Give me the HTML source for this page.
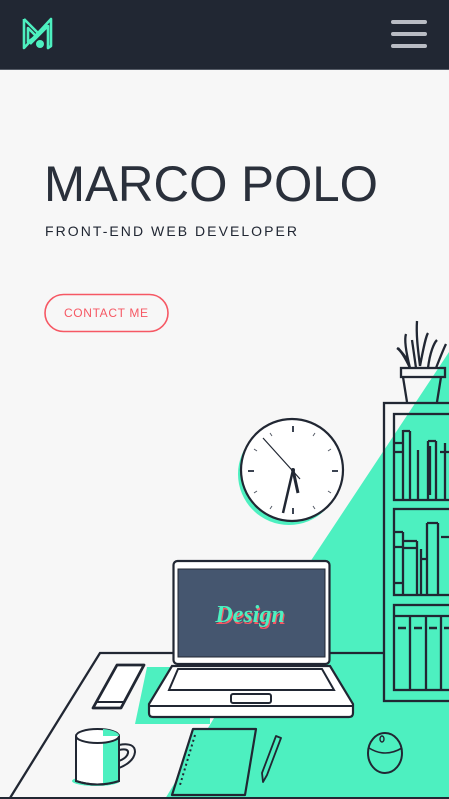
<!DOCTYPE html>
<html><head><meta charset="utf-8"><style>
html,body{margin:0;padding:0;width:449px;height:799px;overflow:hidden;background:#f7f7f7}
svg{display:block}
</style></head><body>
<svg width="449" height="799" viewBox="0 0 449 799" xmlns="http://www.w3.org/2000/svg">
<rect x="0" y="0" width="449" height="70" fill="#212733"/>
<rect x="0" y="69" width="449" height="1" fill="#555b66"/>
<g fill="none" stroke="#4df0c0" stroke-width="2.6" stroke-linejoin="round">
<path d="M24 19 L24 48 L38 33 L51 19 L51 46 L48 48 L48 26 L30 44"/>
<path d="M24 19 L38 33"/>
<path d="M28 28 L36 36 L28 42 Z"/>
</g>
<circle cx="40" cy="44" r="4" fill="#4df0c0"/>
<g fill="#b9bcc4">
<rect x="391" y="20" width="36" height="4" rx="2"/>
<rect x="391" y="32" width="36" height="4" rx="2"/>
<rect x="391" y="44" width="36" height="4" rx="2"/>
</g>
<text x="44" y="201" font-family="Liberation Sans, sans-serif" font-size="50" fill="#2a303b" textLength="334" lengthAdjust="spacingAndGlyphs">MARCO POLO</text>
<text x="45" y="236" font-family="Liberation Sans, sans-serif" font-size="14" fill="#212733" textLength="254" letter-spacing="2">FRONT-END WEB DEVELOPER</text>
<rect x="45" y="294.5" width="123" height="37" rx="18.5" fill="none" stroke="#f65864" stroke-width="1.6"/>
<text x="64" y="317" font-family="Liberation Sans, sans-serif" font-size="12" fill="#f65864" textLength="85" letter-spacing="1">CONTACT ME</text>
<path d="M449 352 L316 553 L294 586 L165 799 L449 799 Z" fill="#4df0c0"/>
<path d="M147 667 L180 667 L180 717 L210 717 L210 724 L135 724 Z" fill="#4df0c0"/>
<g fill="none" stroke="#212733" stroke-width="2.3">
<path d="M10 798 L100 653 L173 653"/>
<path d="M330 653 L384 653"/>
<rect x="384" y="403" width="80" height="298"/>
<rect x="394" y="414" width="70" height="86"/>
<rect x="394" y="509" width="70" height="86"/>
<rect x="394" y="605" width="70" height="85"/>
<path d="M394 443 L403 443 M394 452 L403 452 M403 430 L403 500 M410 431 L410 500 M403 431 L410 431 M418 450 L418 500 M428 441 L428 500 M428 441 L436 441 M436 441 L436 500 M430 446 L430 495 M445 443 L445 500 M440 452 L449 452"/>
<path d="M394 532 L403 532 M403 532 L403 595 M394 547 L403 547 M403 541 L417 541 M417 541 L417 595 M403 548 L417 548 M421 549 L421 595 M421 559 L427 559 M427 523 L427 595 M427 523 L438 523 M438 523 L438 595 M441 537 L449 537 M394 583 L403 583"/>
<path d="M394 616 L449 616 M410 616 L410 690 M426 616 L426 690 M441 616 L441 690" />
<path d="M398 628 L406 628 M414 628 L422 628 M429 628 L437 628 M444 628 L449 628" stroke-width="2.4"/>
<rect x="401" y="368" width="44" height="9"/>
<path d="M403 377 L407 402 M441 377 L437 402"/>
<path d="M410 368 C404 355 400 350 397 348 M410 368 C406 352 404 340 406 334 M416 368 L412 340 M420 366 C418 350 416 335 417 321 M420 366 C424 345 426 336 428 333 M428 368 C430 352 434 343 437 340 M436 368 C440 358 443 350 446 344 M410 368 C408 358 402 353 398 348"/>
</g>
<circle cx="289" cy="474" r="51" fill="#4df0c0"/>
<circle cx="292" cy="470" r="51" fill="#fff" stroke="#212733" stroke-width="2.2"/>
<g stroke="#3c4452" stroke-width="2">
<path d="M293 426 v6 M293 508 v6 M248 471 h6 M332 471 h6"/>
</g>
<g stroke="#555b66" stroke-width="1">
<path d="M270 433 l2 3 M315 433 l-2 3 M254 449 l3 2 M331 449 l-3 2 M254 493 l3 -2 M331 493 l-3 -2 M270 509 l2 -3 M315 509 l-2 -3"/>
</g>
<path d="M263 438 L300 479" stroke="#212733" stroke-width="1.2"/>
<path d="M293 470 L283 513" stroke="#212733" stroke-width="2.5"/>
<path d="M293 470 L298 493" stroke="#212733" stroke-width="3"/>
<circle cx="293" cy="470" r="2" fill="#212733"/>
<rect x="173.5" y="561" width="156" height="103" rx="4" fill="#fff" stroke="#212733" stroke-width="2.2"/>
<rect x="178" y="569" width="147" height="88" fill="#45566f" stroke="#212733" stroke-width="1"/>
<text x="251" y="624" text-anchor="middle" font-family="Liberation Serif, serif" font-style="italic" font-weight="bold" font-size="24" fill="#f65864">Design</text>
<text x="250" y="622" text-anchor="middle" font-family="Liberation Serif, serif" font-style="italic" font-weight="bold" font-size="24" fill="#4df0c0">Design</text>
<path d="M172 666 L330 666 L353 704 L353 713 Q353 717 349 717 L153 717 Q149 717 149 713 L149 704 Z" fill="#fff" stroke="#212733" stroke-width="2.2"/>
<path d="M149 706 L353 706" stroke="#212733" stroke-width="2"/>
<path d="M178 669 L322 669 L334 690 L169 690 Z" fill="#fff" stroke="#212733" stroke-width="2"/>
<rect x="231" y="694" width="40" height="9" rx="2" fill="#fff" stroke="#212733" stroke-width="2"/>
<path d="M117 665 L144 665 L121 708 L93 708 Z" fill="#fff" stroke="#212733" stroke-width="2.8" stroke-linejoin="round"/>
<path d="M96 702 L124 702" stroke="#212733" stroke-width="2"/>
<ellipse cx="96" cy="781" rx="24" ry="5" fill="#4df0c0"/>
<path d="M76 737 L76 781 Q97 788 119 781 L119 737 Z" fill="#fff" stroke="#212733" stroke-width="2"/>
<path d="M103 732 L119 737 L119 781 L103 784 Z" fill="#4df0c0"/>
<path d="M76 737 L76 781 Q97 788 119 781 L119 737" fill="none" stroke="#212733" stroke-width="2"/>
<ellipse cx="97.5" cy="736" rx="21.5" ry="7" fill="#fff" stroke="#212733" stroke-width="2"/>
<path d="M103 729 A21.5 7 0 0 1 119 736 L103 736 Z" fill="#4df0c0"/>
<path d="M119 745 Q135 742 135 752 Q134 762 119 768" fill="none" stroke="#212733" stroke-width="2"/>
<path d="M119 750 Q129 748 128 753 Q127 758 119 761" fill="none" stroke="#212733" stroke-width="2"/>
<path d="M193 729 L256 729 L245 795 L172 795 Z" fill="#4df0c0" stroke="#212733" stroke-width="2.2" stroke-linejoin="round"/>
<path d="M195 735 L180 785" stroke="#212733" stroke-width="2" stroke-dasharray="2 3"/>
<path d="M276 736 L281 738 L267 775 L263 782 L262 773 Z" fill="#4df0c0" stroke="#212733" stroke-width="1.8" stroke-linejoin="round"/>
<ellipse cx="385" cy="753" rx="17" ry="20" fill="none" stroke="#212733" stroke-width="2"/>
<path d="M369 748 Q385 758 402 748" fill="none" stroke="#212733" stroke-width="1.6"/>
<ellipse cx="382" cy="739" rx="2" ry="3" fill="none" stroke="#212733" stroke-width="1.4"/>
<rect x="0" y="797" width="449" height="2" fill="#212733"/>
</svg>
</body></html>
